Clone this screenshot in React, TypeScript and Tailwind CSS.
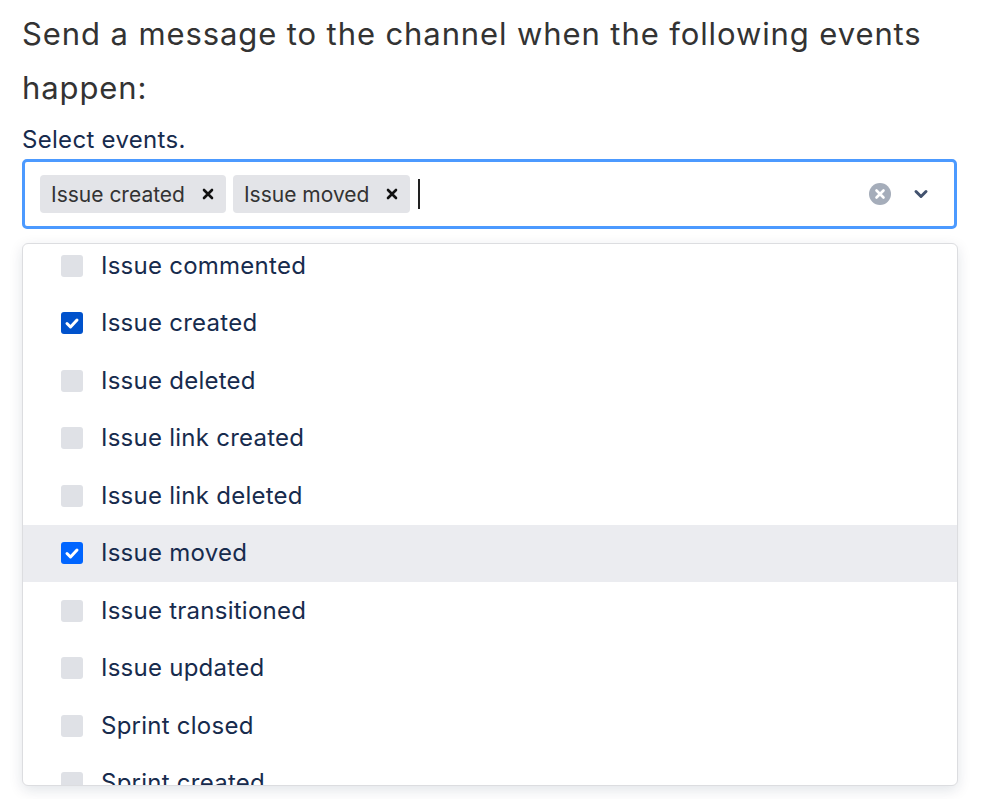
import React from "react";

const items: { label: string; checked: boolean; hover?: boolean }[] = [
  { label: "Issue commented", checked: false },
  { label: "Issue created", checked: true },
  { label: "Issue deleted", checked: false },
  { label: "Issue link created", checked: false },
  { label: "Issue link deleted", checked: false },
  { label: "Issue moved", checked: true, hover: true },
  { label: "Issue transitioned", checked: false },
  { label: "Issue updated", checked: false },
  { label: "Sprint closed", checked: false },
  { label: "Sprint created", checked: false },
];

function Chip({ label }: { label: string }) {
  return (
    <div className="flex h-[38px] items-center rounded-[4px] bg-[#e3e4e8] pl-[11px] pr-[12px]">
      <span className="text-[21px] leading-none text-[#333333]">{label}</span>
      <svg width="12" height="12" viewBox="0 0 12 12" className="ml-[17px]">
        <path d="M2 2L10 10M10 2L2 10" stroke="#111" strokeWidth="2.6" strokeLinecap="round" />
      </svg>
    </div>
  );
}

function Check({ checked, hover }: { checked: boolean; hover?: boolean }) {
  if (!checked) {
    return <div className="h-[22px] w-[22px] shrink-0 rounded-[3px] bg-[#dfe1e6]" />;
  }
  return (
    <div
      className={
        hover
          ? "flex h-[22px] w-[22px] shrink-0 items-center justify-center rounded-[3px] bg-[#0065ff]"
          : "flex h-[22px] w-[22px] shrink-0 items-center justify-center rounded-[3px] bg-[#0052cc]"
      }
    >
      <svg width="22" height="22" viewBox="0 0 22 22">
        <path d="M6 11.5L9.5 15L16 8" stroke="#fff" strokeWidth="3" fill="none" strokeLinecap="round" strokeLinejoin="round" />
      </svg>
    </div>
  );
}

export default function App() {
  return (
    <div className="min-h-[799px] bg-white pl-[22px] pt-[7px] font-['Inter','Liberation_Sans',sans-serif]">
      <h1 className="w-[940px] text-[31px] font-normal leading-[54px] tracking-[0.9px] text-[#333333]">
        Send a message to the channel when the following events happen:
      </h1>
      <div className="mt-[10px] text-[24px] leading-[30px] tracking-[0.3px] text-[#172b4d]">Select events.</div>
      <div className="mt-[4px] flex h-[70px] w-[935px] items-center rounded-[5px] border-[3px] border-[#4c9aff] pl-[15px] pr-[25px]">
        <div className="flex flex-1 items-center gap-[7px]">
          <Chip label="Issue created" />
          <Chip label="Issue moved" />
          <div className="ml-[1px] h-[30px] w-[2px] bg-[#222]" />
        </div>
        <svg width="22" height="22" viewBox="0 0 22 22">
          <circle cx="11" cy="11" r="11" fill="#a5adba" />
          <path d="M7.5 7.5L14.5 14.5M14.5 7.5L7.5 14.5" stroke="#fff" strokeWidth="2.6" strokeLinecap="round" />
        </svg>
        <svg width="16" height="16" viewBox="0 0 16 16" className="ml-[22px]">
          <path d="M3 5.5L8 10.5L13 5.5" stroke="#42526e" strokeWidth="3" fill="none" strokeLinecap="round" strokeLinejoin="round" />
        </svg>
      </div>
      <div className="mt-[14px] h-[543px] w-[936px] overflow-hidden rounded-[6px] border border-[#dcdde0] bg-white shadow-[0_4px_14px_rgba(9,30,66,0.12)]">
        <div className="-mt-[7px]">
          {items.map((it) => (
            <div
              key={it.label}
              className={
                it.hover
                  ? "flex h-[57.5px] items-center bg-[#ebecf0] pl-[38px]"
                  : "flex h-[57.5px] items-center pl-[38px]"
              }
            >
              <Check checked={it.checked} hover={it.hover} />
              <span className="ml-[18px] text-[24px] leading-none tracking-[0.25px] text-[#172b4d]">{it.label}</span>
            </div>
          ))}
        </div>
      </div>
    </div>
  );
}
